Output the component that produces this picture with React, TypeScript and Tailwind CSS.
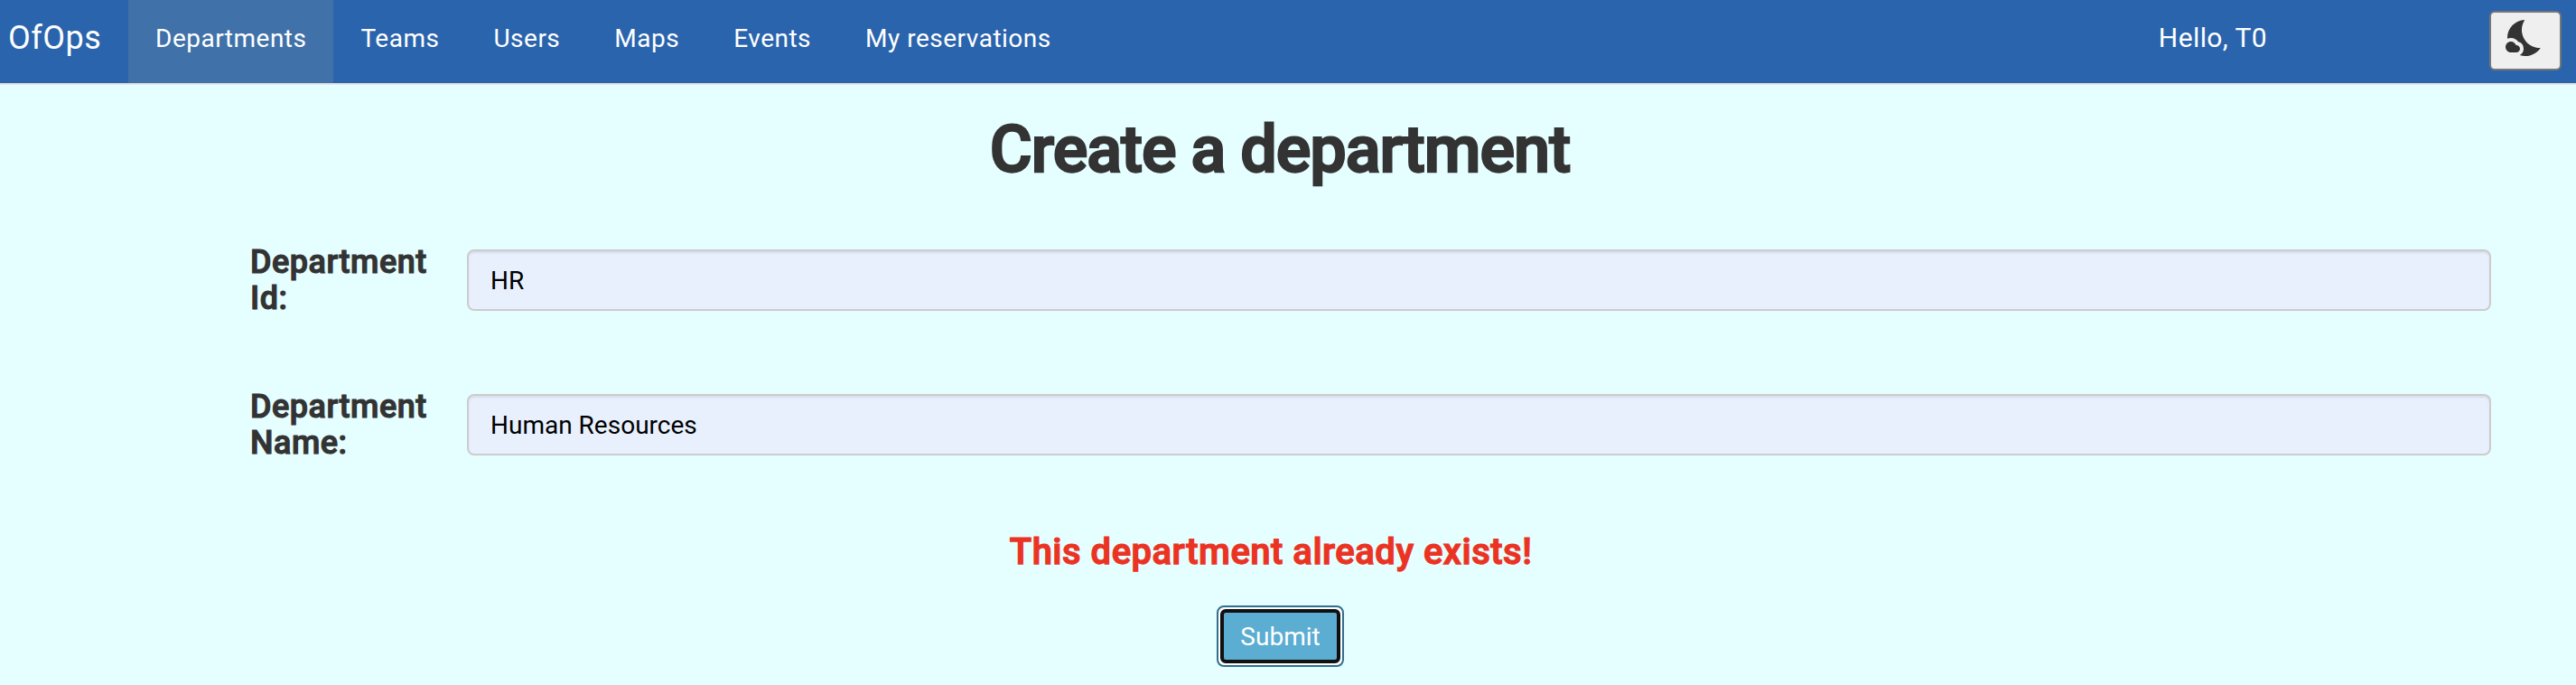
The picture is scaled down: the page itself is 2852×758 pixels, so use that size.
import { MdNightsStay } from "react-icons/md";

const links = ["Departments", "Teams", "Users", "Maps", "Events", "My reservations"];

function Field({ label, name, value }: { label: string; name: string; value: string }) {
  return (
    <div className="flex h-17">
      <label
        htmlFor={name}
        className="-mt-1.5 w-[240px] shrink-0 pr-10 text-[36px] leading-10 font-medium tracking-[0.5px] [-webkit-text-stroke:1.125px_#333333]"
      >
        {label}
      </label>
      <input
        id={name}
        defaultValue={value}
        className="h-17 w-[2241px] rounded-lg border-2 border-[#cccccc] bg-[#e8f0fe] px-6 text-[28px] text-black shadow-[inset_0_2px_2px_rgba(0,0,0,0.075)]"
      />
    </div>
  );
}

export default function App() {
  return (
    <div className="h-[758px] w-[2852px] overflow-hidden bg-[#e5feff] font-['Roboto',sans-serif] text-[#333333]">
      <nav className="flex h-[94px] border-b-2 border-[#e7e7e7] bg-[#2a64ad] text-[28px] leading-10 tracking-[0.5px] text-white">
        <a className="w-[142px] pt-[22px] pl-[9px] text-[36px]">OfOps</a>
        {links.map((link) => (
          <a key={link} className={link === "Departments" ? "bg-[#4072a9] px-[30px] pt-[23px]" : "px-[30px] pt-[23px]"}>
            {link}
          </a>
        ))}
        <span className="mr-[246px] ml-auto pt-[22px] text-[30px] tracking-[0.4px]">Hello, T0</span>
        <button className="mt-3 mr-4 h-[66px] w-20 rounded-md border-2 border-[#767676] bg-[#efefef] pl-3.5">
          <MdNightsStay className="-mt-1.5 size-12 text-[#333333]" />
        </button>
      </nav>
      <h1 className="pt-8 pr-[18px] text-center text-[72px] leading-[79px] font-medium tracking-[-1px] [-webkit-text-stroke:2.25px_#333333]">
        Create a department
      </h1>
      <form className="pt-[71px] pl-[277px]">
        <div className="flex flex-col gap-23">
          <Field label="Department Id:" name="department-id" value="HR" />
          <Field label="Department Name:" name="department-name" value="Human Resources" />
        </div>
      </form>
      <p className="mt-[84px] pr-[38px] text-center text-[40px] leading-[45px] font-medium tracking-[0.5px] text-[#eb3323] [-webkit-text-stroke:1.25px_#eb3323]">
        This department already exists!
      </p>
      <div className="mt-[37px] flex justify-center pr-[17px]">
        <button className="h-17 w-[141px] rounded-lg border-2 border-[#306f8d] bg-white p-0.5 text-[28px] text-white">
          <span className="flex h-full items-center justify-center rounded-md border-4 border-[#101010] bg-[#5badd2] pt-0.5">
            Submit
          </span>
        </button>
      </div>
    </div>
  );
}
